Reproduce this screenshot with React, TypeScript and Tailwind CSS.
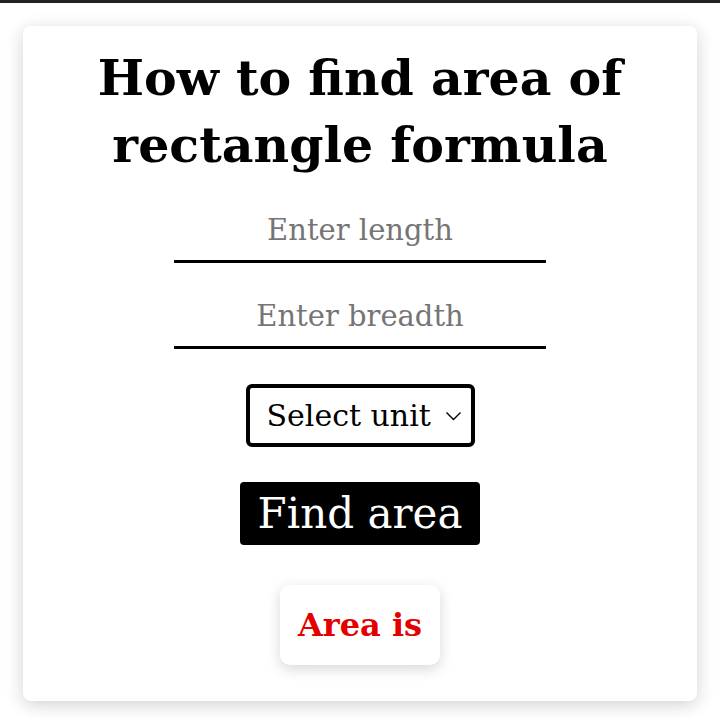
import React from 'react';

const serif = "font-['DejaVu_Serif',serif]";

const App: React.FC = () => {
  return (
    <div className={`min-h-[718px] bg-white ${serif}`}>
      <div className="h-[3px] bg-[#212121]" />
      <div className="px-[23px] pt-[23px] pb-[17px]">
        <div className="bg-white rounded-lg shadow-[0_4px_18px_rgba(0,0,0,0.18)] h-[675px] flex flex-col items-center pt-[19px]">
          <h1 className="text-center font-bold text-[49px] leading-[67px] text-black">
            How to find area of
            <br />
            rectangle formula
          </h1>

          <input
            type="text"
            placeholder="Enter length"
            className="mt-[28px] w-[372px] h-[56px] pb-[8px] border-b-[3px] border-black text-center text-[29px] text-black placeholder:text-[#757575] outline-none bg-transparent"
          />
          <input
            type="text"
            placeholder="Enter breadth"
            className="mt-[30px] w-[372px] h-[56px] pb-[8px] border-b-[3px] border-black text-center text-[29px] text-black placeholder:text-[#757575] outline-none bg-transparent"
          />

          <div className="mt-[35px] relative w-[229px] h-[63px] border-[4px] border-black rounded-[6px] flex items-center">
            <select className="appearance-none w-full h-full bg-transparent pl-[17px] text-[30px] text-black outline-none">
              <option>Select unit</option>
            </select>
            <svg
              className="absolute right-[9px] top-1/2 -translate-y-1/2 pointer-events-none"
              width="17"
              height="10"
              viewBox="0 0 17 10"
              fill="none"
            >
              <path d="M1.5 1.5 L8.5 8.5 L15.5 1.5" stroke="black" strokeWidth="1.4" />
            </svg>
          </div>

          <button className="mt-[35px] w-[240px] h-[63px] bg-black text-white rounded-[4px] text-[42px] leading-none">
            Find area
          </button>

          <div className="mt-[40px] w-[160px] h-[80px] bg-white rounded-[10px] shadow-[0_4px_14px_rgba(0,0,0,0.16)] flex items-center justify-center">
            <span className="text-[#e50000] font-bold text-[32px]">Area is</span>
          </div>
        </div>
      </div>
    </div>
  );
};

export default App;
